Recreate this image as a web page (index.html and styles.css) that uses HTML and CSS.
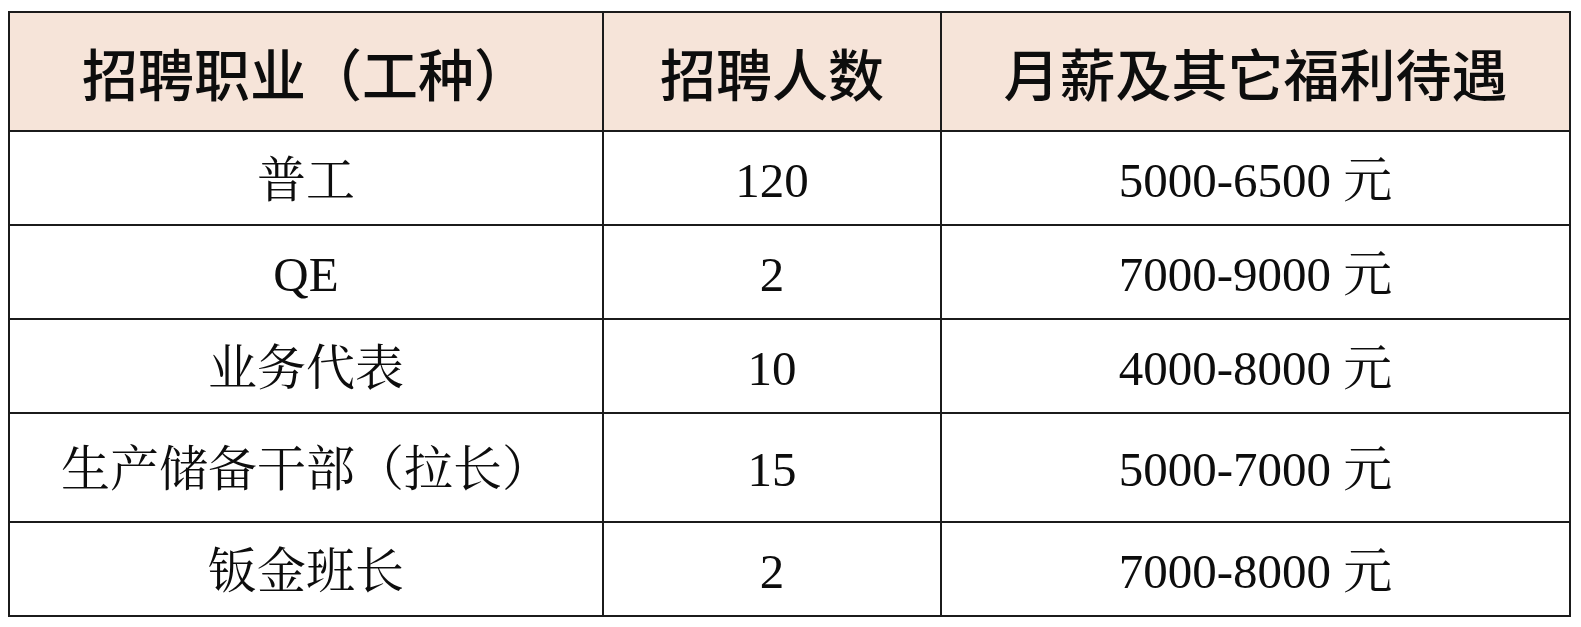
FILE: index.html
```html
<!DOCTYPE html>
<html lang="zh-CN">
<head>
<meta charset="utf-8">
<title>招聘</title>
<link rel="stylesheet" href="styles.css">
</head>
<body>
<table class="jobs">
  <colgroup>
    <col class="c1"><col class="c2"><col class="c3">
  </colgroup>
  <thead>
    <tr class="head">
      <th>招聘职业（工种）</th>
      <th>招聘人数</th>
      <th>月薪及其它福利待遇</th>
    </tr>
  </thead>
  <tbody>
    <tr><td>普工</td><td>120</td><td>5000-6500 元</td></tr>
    <tr><td>QE</td><td>2</td><td>7000-9000 元</td></tr>
    <tr><td>业务代表</td><td>10</td><td>4000-8000 元</td></tr>
    <tr class="tall"><td>生产储备干部（拉长）</td><td>15</td><td>5000-7000 元</td></tr>
    <tr><td>钣金班长</td><td>2</td><td>7000-8000 元</td></tr>
  </tbody>
</table>
</body>
</html>
```

FILE: styles.css
```css
html, body {
  margin: 0;
  background: #ffffff;
}
body {
  padding: 11px 10px 0 8px;
}
.jobs {
  border-collapse: collapse;
  width: 1563px;
  table-layout: fixed;
  border: 2px solid #1b1b1b;
}
.c1 { width: 594px; }
.c2 { width: 338px; }
.c3 { width: auto; }
.jobs th, .jobs td {
  border: 2px solid #1b1b1b;
  text-align: center;
  vertical-align: middle;
  padding: 0;
  color: #0d0d0d;
}
.head th {
  background: #f6e4d9;
  height: 117px;
  font-family: "Noto Sans CJK SC", sans-serif;
  font-weight: 500;
  font-size: 56px;
  line-height: 1;
}
.jobs td {
  height: 88px;
  font-family: "Liberation Serif", "Noto Serif CJK SC", "Noto Sans CJK SC", serif;
  font-weight: 400;
  font-size: 49px;
  line-height: 1;
  padding-top: 4px;
}
.jobs tr.tall td {
  height: 103px;
}
```
